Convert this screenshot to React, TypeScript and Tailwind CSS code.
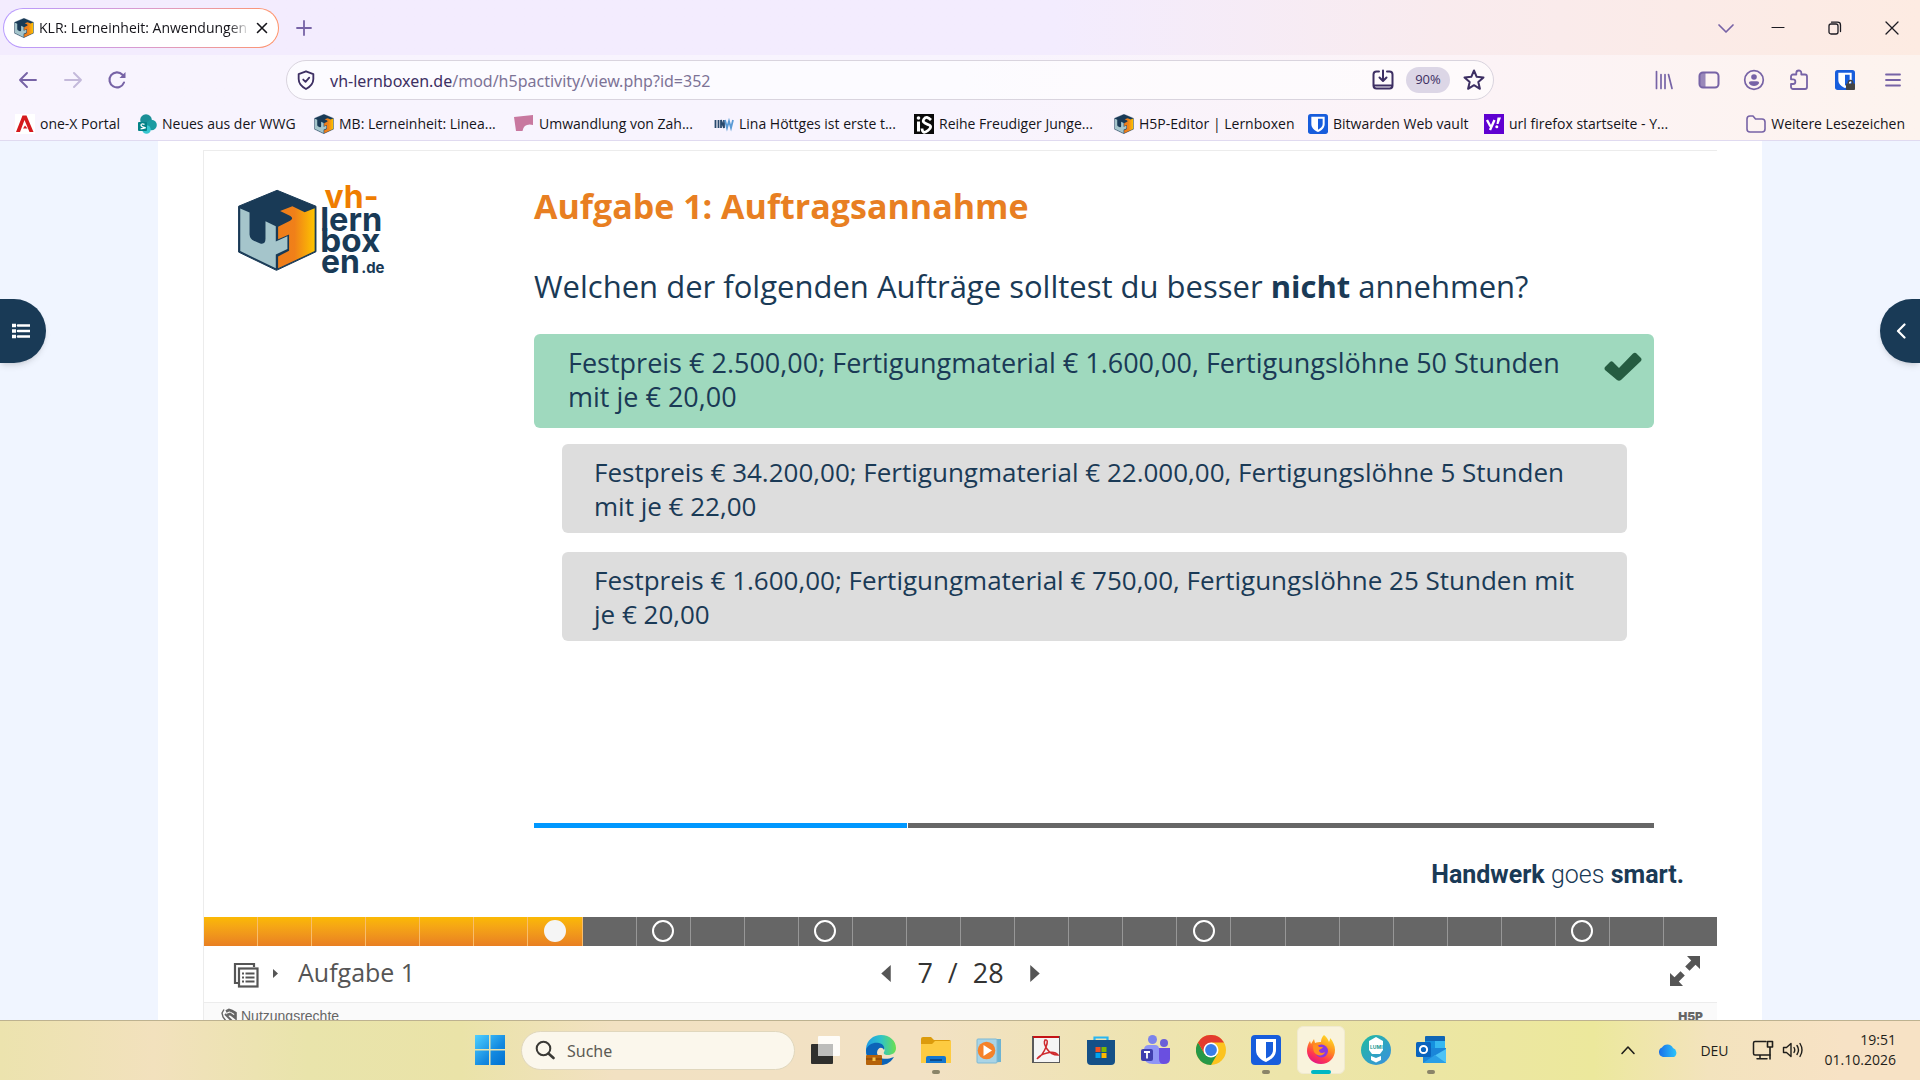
import React, { useId } from "react";
import type { ReactNode } from "react";

/* ---------- shared artwork ---------- */

function CubeShape() {
  const id = useId();
  return (
    <g>
      <defs>
        <linearGradient id={id} x1="0" x2="1" y1="0" y2="0">
          <stop offset="0" stopColor="#ef7d1a" />
          <stop offset="0.45" stopColor="#f08019" />
          <stop offset="1" stopColor="#fdc300" />
        </linearGradient>
      </defs>
      <path d="M381 151 498 199V336L379 392 265 337V199Z" fill="#193a56" stroke="#193a56" strokeWidth="3" strokeLinejoin="round" />
      <path d="M270 206 298 218V284Q299 297 311 303L330 311Q346 315 346 297V244L377 259V305L412 289V328L377 344V386L270 334Z" fill="#a5c5cb" />
      <path d="M384 261 420 243Q432 236 421 228L390 213 427 199 464 217 494 205V334L384 386V350L417 333V284L384 298Z" fill={`url(#${id})`} />
    </g>
  );
}

function CubeIcon() {
  return (
    <svg viewBox="262 148 239 247" className="h-5 w-5 shrink-0" aria-hidden="true">
      <CubeShape />
    </svg>
  );
}

function BitwardenIcon({ className }: { className: string }) {
  return (
    <svg viewBox="0 0 30 30" className={className} aria-hidden="true">
      <rect width="30" height="30" rx="4" fill="#175ddc" />
      <path d="M5 4H25V15C25 21 20 25 15 27C10 25 5 21 5 15Z" fill="#fff" />
      <path d="M15 7H22V15C22 19 19 21.500 15 23.500Z" fill="#175ddc" />
    </svg>
  );
}

function BrandLogo() {
  return (
    <svg viewBox="258 120 450 295" className="h-[98px] w-[150px] overflow-visible" role="img" aria-label="vh-lernboxen.de">
      <CubeShape />
      <g fontFamily="Inter, sans-serif" fontWeight="700" fill="#193a56">
        <text x="524" y="203" fontSize="96" fill="#ef7d00">vh-</text>
        <text x="511" y="275" fontSize="98">lern</text>
        <text x="511" y="337" fontSize="100">box</text>
        <text x="513" y="401" fontSize="96">en</text>
        <text x="634" y="401" fontSize="45">.de</text>
      </g>
    </svg>
  );
}

/* ---------- browser chrome ---------- */

function IconButton({ label, className = "", children }: { label: string; className?: string; children: ReactNode }) {
  return (
    <button type="button" aria-label={label} className={`flex shrink-0 items-center justify-center ${className}`}>
      {children}
    </button>
  );
}

const line = { fill: "none", stroke: "currentColor", strokeWidth: 2, strokeLinecap: "round", strokeLinejoin: "round" } as const;

function TitleBar() {
  return (
    <div className="flex h-[55px] shrink-0 items-center bg-linear-to-r from-[#f3ecfe] from-55% via-[#f9ebee] via-75% to-[#fdebe2] pl-[3px]">
      <div className="h-10 w-[276px] rounded-full bg-linear-to-r from-[#b79bff] via-[#d99bd0] to-[#ff9468] p-px">
        <div className="flex h-full items-center rounded-full bg-white pr-2 pl-[10px]">
          <CubeIcon />
          <span className="ml-[5px] flex-1 overflow-hidden text-sm whitespace-nowrap text-[#15141a] [mask-image:linear-gradient(to_right,black_90%,transparent)]">
            KLR: Lerneinheit: Anwendungen
          </span>
          <IconButton label="Tab schließen" className="ml-1 h-4 w-4 text-[#15141a]">
            <svg viewBox="0 0 16 16" className="h-4 w-4"><path d="M3.500 3.500 12.500 12.500M12.500 3.500 3.500 12.500" {...line} strokeWidth={1.6} /></svg>
          </IconButton>
        </div>
      </div>
      <IconButton label="Neuer Tab" className="ml-[15px] h-5 w-5 text-[#7763a6]">
        <svg viewBox="0 0 20 20" className="h-5 w-5"><path d="M10 3V17M3 10H17" {...line} strokeWidth={1.8} /></svg>
      </IconButton>
      <div className="ml-auto flex items-center text-[#1c1b22]">
        <IconButton label="Tabs auflisten" className="h-10 w-[46px] text-[#7763a6]">
          <svg viewBox="0 0 20 20" className="h-5 w-5"><path d="M3 7 10 14 17 7" {...line} strokeWidth={1.7} /></svg>
        </IconButton>
        <IconButton label="Minimieren" className="h-10 w-[57px]">
          <svg viewBox="0 0 14 14" className="h-[14px] w-[14px]"><path d="M1 6.500H13" {...line} strokeWidth={1.200} /></svg>
        </IconButton>
        <IconButton label="Verkleinern" className="h-10 w-[57px]">
          <svg viewBox="0 0 14 14" className="h-[14px] w-[14px]">
            <g {...line} strokeWidth={1.300}><rect x="1" y="3" width="9" height="10" rx="2" /><path d="M3.500 1.200H9.500Q12.500 1.200 12.500 4V10.500" /></g>
          </svg>
        </IconButton>
        <IconButton label="Schließen" className="h-10 w-[57px]">
          <svg viewBox="0 0 14 14" className="h-[14px] w-[14px]"><path d="M1 1 13 13M13 1 1 13" {...line} strokeWidth={1.300} /></svg>
        </IconButton>
      </div>
    </div>
  );
}

function NavBar() {
  return (
    <div className="flex h-[50px] items-center pl-4 text-[#7763a6]">
      <IconButton label="Zurück" className="h-6 w-6">
        <svg viewBox="0 0 24 24" className="h-6 w-6"><path d="M20 12H4M11 5 4 12 11 19" {...line} strokeWidth={1.900} /></svg>
      </IconButton>
      <IconButton label="Vor" className="ml-[21px] h-6 w-6 opacity-40">
        <svg viewBox="0 0 24 24" className="h-6 w-6"><path d="M4 12H20M13 5 20 12 13 19" {...line} strokeWidth={1.900} /></svg>
      </IconButton>
      <IconButton label="Neu laden" className="ml-5 h-6 w-6">
        <svg viewBox="0 0 24 24" className="h-6 w-6"><path d="M19 14.500A7.500 7.500 0 1 1 17.500 6.800L19 8.500" {...line} strokeWidth={2.100} /><path d="M20.500 4V10H14.500Z" fill="currentColor" /></svg>
      </IconButton>
      <div className="ml-[157px] flex h-10 w-[1208px] min-w-0 shrink items-center rounded-full border border-[#d9d4de] bg-white/60 pr-[7px] pl-2 text-[#3d2f63]">
        <svg viewBox="0 0 24 24" className="h-[22px] w-[22px] shrink-0" aria-hidden="true"><path d="M12 2.500 20 5.500V11C20 16 16.500 19.500 12 21.800C7.500 19.500 4 16 4 11V5.500ZM9 11.500 11.500 14 15.500 9.500" {...line} /></svg>
        <label htmlFor="address" className="sr-only">Adresse</label>
        <div className="relative ml-[13px] min-w-0 flex-1 pt-[2px] font-['Noto_Sans',sans-serif] text-base leading-6">
          <span aria-hidden="true" className="block whitespace-nowrap text-[#7c7396]"><span className="text-[#3d2f63]">vh-lernboxen.de</span>/mod/h5pactivity/view.php?id=352</span>
          <input id="address" defaultValue="" className="absolute inset-0 w-full bg-transparent outline-none" />
        </div>
        <IconButton label="App installieren" className="h-6 w-6">
          <svg viewBox="0 0 24 24" className="h-6 w-6"><path d="M8 3.500H5.500A3 3 0 0 0 2.500 6.500V17.500A3 3 0 0 0 5.500 20.500H18.500A3 3 0 0 0 21.500 17.500V6.500A3 3 0 0 0 18.500 3.500H16M3 17.500H21M12 2.500V12.500M8.500 9.500 12 13 15.500 9.500" {...line} /></svg>
        </IconButton>
        <button type="button" className="ml-[11px] h-[26px] w-11 shrink-0 rounded-full bg-[#dcd6e6] text-[13px]">90%</button>
        <IconButton label="Lesezeichen hinzufügen" className="ml-3 h-6 w-6">
          <svg viewBox="0 0 24 24" className="h-6 w-6"><path d="M12 2.500 14.700 8.800 21.500 9.400 16.300 13.900 17.900 20.800 12 17.200 6.100 20.800 7.700 13.900 2.500 9.400 9.300 8.800Z" {...line} /></svg>
        </IconButton>
      </div>
      <div className="ml-auto flex items-center pr-[15px]">
        <IconButton label="Bibliothek" className="h-6 w-[45px]">
          <svg viewBox="0 0 24 24" className="h-6 w-6"><path d="M4.500 3.500V20.500M9 6.500V20.500M13 6.500V20.500M16.500 6.500 20 20.500" {...line} strokeWidth={1.700} /></svg>
        </IconButton>
        <IconButton label="Seitenleiste" className="h-6 w-[45px]">
          <svg viewBox="0 0 24 24" className="h-6 w-6"><rect x="2.500" y="4.500" width="19" height="15" rx="3.500" {...line} /><path d="M5.500 5H8.500V19H5.500Q3 19 3 16V8Q3 5 5.500 5" fill="currentColor" opacity=".75" /></svg>
        </IconButton>
        <IconButton label="Konto" className="h-6 w-[45px]">
          <svg viewBox="0 0 24 24" className="h-6 w-6"><circle cx="12" cy="12" r="9.300" {...line} strokeWidth={1.700} /><circle cx="12" cy="9" r="2.800" fill="currentColor" /><path d="M6.800 15Q6.800 13.300 9 13.300H15Q17.200 13.300 17.200 15Q15.500 18 12 18T6.800 15" fill="currentColor" /></svg>
        </IconButton>
        <IconButton label="Erweiterungen" className="h-6 w-[45px]">
          <svg viewBox="0 0 24 24" className="h-6 w-6"><path d="M9.300 6.500V5A2.500 2.500 0 0 1 14.300 5V6.500H18A2 2 0 0 1 20 8.500V19A2 2 0 0 1 18 21H6A2 2 0 0 1 4 19V16H6A2.300 2.300 0 0 0 6 11.300H4V8.500A2 2 0 0 1 6 6.500Z" {...line} strokeWidth={1.800} /></svg>
        </IconButton>
        <IconButton label="Bitwarden" className="relative ml-3 h-6 w-6">
          <BitwardenIcon className="h-5 w-5" />
          <svg viewBox="0 0 10 12" className="absolute right-[2px] bottom-[2px] h-[11px] w-[9px]"><path d="M2.500 6V4A2.500 2.500 0 0 1 7.500 4V6" fill="none" stroke="#444" strokeWidth="1.500" /><rect x="0" y="5" width="10" height="7" rx="1" fill="#444" /></svg>
        </IconButton>
        <IconButton label="Menü" className="ml-6 h-6 w-6">
          <svg viewBox="0 0 24 24" className="h-6 w-6"><path d="M5 6.500H19M5 12H19M5 17.500H19" {...line} strokeWidth={1.800} /></svg>
        </IconButton>
      </div>
    </div>
  );
}

const small = "h-5 w-5 shrink-0";

const bookmarks: { label: string; width: string; icon: ReactNode }[] = [
  {
    label: "one-X Portal",
    width: "w-[122px]",
    icon: (
      <svg viewBox="0 0 20 20" className={small}><rect width="20" height="20" fill="#fff" /><path d="M1 18 7.500 1.500H11.500L18.500 18H14.500L9.500 6 5 18Z" fill="#d5191d" /><path d="M8 14.500 10 11.500 12.500 14.500Z" fill="#d5191d" /></svg>
    ),
  },
  {
    label: "Neues aus der WWG",
    width: "w-[177px]",
    icon: (
      <svg viewBox="0 0 20 20" className={small}><circle cx="9" cy="6" r="5.800" fill="#1b8f97" /><circle cx="14.500" cy="11" r="5.300" fill="#1a9ba1" /><circle cx="9.500" cy="15.500" r="4.300" fill="#37c6d0" /><rect x="1" y="8" width="9" height="9" rx="1" fill="#038387" /><path d="M7.500 10.300Q4 9.300 4 11T7.300 13.300T3.600 14.800" stroke="#fff" strokeWidth="1.200" fill="none" /></svg>
    ),
  },
  { label: "MB: Lerneinheit: Linea...", width: "w-[200px]", icon: <CubeIcon /> },
  {
    label: "Umwandlung von Zah...",
    width: "w-[200px]",
    icon: <svg viewBox="0 0 20 20" className={small}><path d="M0 3 19 1V11Q10 9 8.500 17H2Z" fill="#c8789f" /></svg>,
  },
  {
    label: "Lina Höttges ist erste t...",
    width: "w-[200px]",
    icon: (
      <svg viewBox="0 0 20 20" className={small}><path d="M1.500 6V14M4.500 6V14M7 14V6L10 14V6" stroke="#27496d" strokeWidth="1.800" fill="none" /><path d="M11 6 13 14 15 7 17 14 19 6" stroke="#5b9bd5" strokeWidth="1.800" fill="none" /></svg>
    ),
  },
  {
    label: "Reihe Freudiger Junge...",
    width: "w-[200px]",
    icon: (
      <svg viewBox="0 0 20 20" className={small}><rect width="20" height="20" fill="#0a0a0a" /><rect x="3" y="7.500" width="3" height="10" fill="#fff" /><circle cx="4.500" cy="4" r="1.800" fill="#fff" /><path d="M17 6Q12.500 1.500 10 5T13.500 10.300T14 16.500T8 14.500" stroke="#fff" strokeWidth="2.800" fill="none" /></svg>
    ),
  },
  { label: "H5P-Editor | Lernboxen", width: "w-[194px]", icon: <CubeIcon /> },
  { label: "Bitwarden Web vault", width: "w-[176px]", icon: <BitwardenIcon className={small} /> },
  {
    label: "url firefox startseite - Y...",
    width: "w-[200px]",
    icon: (
      <svg viewBox="0 0 20 20" className={small}><rect width="20" height="20" fill="#5f01d1" /><path d="M3 6 6.500 12.500M10.500 6 6 16" stroke="#fff" strokeWidth="2.400" fill="none" /><path d="M13.500 3.500H17L14.500 10H12.500Z" fill="#fff" /><circle cx="12.800" cy="12.700" r="1.500" fill="#fff" /></svg>
    ),
  },
];

function BookmarksBar() {
  return (
    <div className="flex h-[35px] items-center pt-[2px] pr-[15px] pl-[15px] text-sm text-[#15141a]">
      {bookmarks.map((b) => (
        <a key={b.label} href="#" className={`flex shrink-0 items-center gap-[5px] whitespace-nowrap ${b.width}`}>
          {b.icon}
          {b.label}
        </a>
      ))}
      <button type="button" className="ml-auto flex items-center gap-[5px] whitespace-nowrap">
        <svg viewBox="0 0 20 20" className="h-5 w-5 text-[#7763a6]" aria-hidden="true"><path d="M1 5A3 3 0 0 1 4 2H7L9.500 5H16A3 3 0 0 1 19 8V15A3 3 0 0 1 16 18H4A3 3 0 0 1 1 15Z" {...line} strokeWidth={1.600} /></svg>
        Weitere Lesezeichen
      </button>
    </div>
  );
}

/* ---------- slide ---------- */

const wrongAnswers = [
  "Festpreis € 34.200,00; Fertigungmaterial € 22.000,00, Fertigungslöhne 5 Stunden mit je € 22,00",
  "Festpreis € 1.600,00; Fertigungmaterial € 750,00, Fertigungslöhne 25 Stunden mit je € 20,00",
];

function Slide() {
  return (
    <section className="flex flex-1 flex-col border-t border-l border-[#ececec] pr-[63px] pl-8">
      <div className="flex flex-1">
        <div className="w-[298px] shrink-0 pt-[29px]">
          <BrandLogo />
        </div>
        <div className="flex flex-1 flex-col pt-[31px] text-[#1a3a56]">
          <h1 className="text-[34px] leading-[48px] font-bold text-[#e87f22]">Aufgabe 1: Auftragsannahme</h1>
          <h2 className="mt-[34px] text-[31px] leading-[44px]">
            Welchen der folgenden Aufträge solltest du besser <strong>nicht</strong> annehmen?
          </h2>
          <div className="mt-[26px] flex h-[94px] items-start justify-between rounded-md bg-[#9fd9be] pt-3 pr-3 pl-[34px]">
            <button type="button" className="max-w-[1020px] text-left text-[27px] leading-[34px]">
              Festpreis € 2.500,00; Fertigungmaterial € 1.600,00, Fertigungslöhne 50 Stunden mit je € 20,00
            </button>
            <svg viewBox="0 0 38 29" className="mt-[6px] h-[29px] w-[38px] shrink-0" role="img" aria-label="Richtig"><path d="M1 15 6 10Q7.500 8.500 9 10L15 16 29 1.500Q31 0 32.500 1.500L37 6Q38 7.500 37 9L17 28Q15 29.500 13 28L1 18Q0 16.500 1 15" fill="#255c41" /></svg>
          </div>
          <div className="mt-4 mr-[27px] ml-7 flex flex-col gap-[19px]">
            {wrongAnswers.map((a) => (
              <button key={a} type="button" className="flex h-[89px] items-start rounded-md bg-[#dddddd] pt-[11px] pr-8 pl-8 text-left text-[26px] leading-[34px]">
                {a}
              </button>
            ))}
          </div>
          <div className="mt-auto mb-[89px] flex h-[5px] gap-px">
            <div className="w-1/3 bg-[#0098ff]" />
            <div className="flex-1 bg-[#666]" />
          </div>
        </div>
      </div>
      <p className="-mt-[59px] -mr-[30px] mb-[25px] text-right font-[Roboto,sans-serif] text-[25px] leading-[34px] text-[#1a3a56]">
        <b className="font-bold">Handwerk</b> <span className="font-light">goes</span> <b className="font-bold">smart.</b>
      </p>
    </section>
  );
}

const taskSlides = [7, 9, 12, 19, 26];

function SlideProgress() {
  return (
    <nav aria-label="Folien" className="flex h-[29px] shrink-0 border-l border-[#ececec]">
      {Array.from({ length: 28 }, (_, i) => i + 1).map((n) => (
        <a
          key={n}
          href="#"
          aria-label={`Folie ${n}`}
          className={`flex flex-1 items-center justify-center pb-px ${n < 28 ? "border-r" : ""} ${n <= 7 ? "border-[#f8bd6c] bg-linear-to-b from-[#fbb903] to-[#e87f22]" : "border-[#979797] bg-[#666]"}`}
        >
          {taskSlides.includes(n) && (
            <span className={`h-[22px] w-[22px] rounded-full border-2 ${n === 7 ? "border-[#f5f5f5] bg-[#f5f5f5]" : "border-white"}`} />
          )}
        </a>
      ))}
    </nav>
  );
}

function SlideFooter() {
  return (
    <footer className="grid h-14 shrink-0 grid-cols-[1fr_auto_1fr] items-center border-l border-[#ececec] pr-7 pb-[2px] pl-7 text-[#555]">
      <div className="flex items-center">
        <IconButton label="Inhaltsverzeichnis" className="mt-1 h-7 w-7">
          <svg viewBox="0 0 28 28" className="h-7 w-7"><path d="M6 22H3V3H22V6" fill="none" stroke="currentColor" strokeWidth="2.200" /><rect x="7" y="7.500" width="18.500" height="18" fill="none" stroke="currentColor" strokeWidth="2.200" /><path d="M10 12.500H12M10 16.500H12M10 20.500H12M13.500 12.500H22.500M13.500 16.500H22.500M13.500 20.500H22.500" stroke="currentColor" strokeWidth="1.800" /></svg>
        </IconButton>
        <svg viewBox="0 0 5 9" className="ml-[13px] h-[9px] w-[5px]" aria-hidden="true"><path d="M0 0 5 4.500 0 9Z" fill="currentColor" /></svg>
        <span className="mb-[2px] ml-5 text-[25px] leading-9">Aufgabe 1</span>
      </div>
      <div className="flex items-center text-[27px] leading-9 text-[#333]">
        <IconButton label="Vorherige Folie" className="h-6 w-6 text-[#555]">
          <svg viewBox="0 0 10 18" className="h-[17px] w-[10px]"><path d="M10 0V18L0 9Z" fill="currentColor" /></svg>
        </IconButton>
        <span className="mx-[19px] flex gap-[15px]"><span>7</span><span>/</span><span>28</span></span>
        <IconButton label="Nächste Folie" className="h-6 w-6 text-[#555]">
          <svg viewBox="0 0 10 18" className="h-[17px] w-[10px]"><path d="M0 0V18L10 9Z" fill="currentColor" /></svg>
        </IconButton>
      </div>
      <IconButton label="Vollbild" className="-mr-3 mb-1 h-8 w-8 justify-self-end">
        <svg viewBox="0 0 32 32" className="h-8 w-8" fill="currentColor"><path d="M18 1H31V14L26.500 9.800 20.500 15.800 16.200 11.500 22.200 5.500Z" /><path d="M14 31H1V18L5.500 22.200 11.500 16.200 15.800 20.500 9.800 26.500Z" /></svg>
      </IconButton>
    </footer>
  );
}

function Page() {
  return (
    <main className="relative flex min-h-0 flex-1 justify-center bg-[#f0f5ff] px-[158px]">
      <div className="flex min-w-0 flex-1 flex-col overflow-hidden bg-white pt-[9px] pr-[45px] pl-[45px]">
        <Slide />
        <SlideProgress />
        <SlideFooter />
        <div className="flex h-[18px] shrink-0 items-start justify-between overflow-hidden border-t border-l border-[#ececec] bg-[#fafafa] pr-[14px] pl-[17px] text-[#666]">
          <button type="button" className="flex items-center gap-1 pt-1 font-['Liberation_Sans',sans-serif] text-sm leading-[18px]">
            <svg viewBox="0 0 16 16" className="h-4 w-4" aria-hidden="true" fill="none" stroke="currentColor"><path d="M3 1.500 1 5 2 9 5 13" strokeWidth="1.400" /><path d="M5 3.500 8 2 11 3 14.500 5V10L12 8 9 6 6 7" strokeWidth="2.600" /><path d="M4 6 11 13" strokeWidth="2" /></svg>
            Nutzungsrechte
          </button>
          <a href="#" className="pt-[5px] font-[Inter,sans-serif] text-xs leading-[18px] font-black">H5P</a>
        </div>
      </div>
      <button type="button" aria-label="Kursindex öffnen" className="absolute top-[158px] left-0 flex h-16 w-[46px] items-center rounded-r-full bg-[#193a56] pl-3 text-white shadow-md">
        <svg viewBox="0 0 18 16" className="h-4 w-[18px]"><path d="M0 2.500H4M0 8H4M0 13.500H4" stroke="currentColor" strokeWidth="3.400" /><path d="M6 2.500H17.500M6 8H17.500M6 13.500H17.500" stroke="currentColor" strokeWidth="2.600" strokeLinecap="round" /></svg>
      </button>
      <button type="button" aria-label="Blockleiste öffnen" className="absolute top-[158px] right-0 flex h-16 w-10 items-center rounded-l-full bg-[#193a56] pl-4 text-white shadow-md">
        <svg viewBox="0 0 10 16" className="h-4 w-[10px]"><path d="M8.500 1.500 2 8 8.500 14.500" {...line} strokeWidth={2.200} /></svg>
      </button>
    </main>
  );
}

/* ---------- taskbar ---------- */

const app = "h-[30px] w-[30px]";

const apps: { name: string; state?: "open" | "active"; icon: ReactNode }[] = [
  {
    name: "Taskansicht",
    icon: (
      <svg viewBox="0 0 30 30" className={app}><rect x="0" y="9" width="22" height="20" rx="1" fill="#2f2f2d" /><rect x="7" y="1" width="22" height="20" rx="1" fill="#fff" opacity=".88" /><rect x="7" y="9" width="15" height="12" fill="#bdbdbb" /></svg>
    ),
  },
  {
    name: "Microsoft Edge",
    icon: (
      <svg viewBox="0 0 30 30" className={app}>
        <defs><linearGradient id="edgeTop" x1="0" x2="1"><stop stopColor="#1e9be6" /><stop offset=".5" stopColor="#2fc3c8" /><stop offset="1" stopColor="#6be04f" /></linearGradient></defs>
        <path d="M0 17C-1 7 6 0 15 0C24 0 30 6 30 13C30 18 26 20 22 20C19 20 17 19 18 17C20 14 17 11 13 12C8 13 8 20 10 26C4 25 0 21 0 17" fill="url(#edgeTop)" />
        <path d="M0 15C2 9 8 7 13 8C17 9 19 12 18 15C16 11 11 13 11 18C12 23 18 26 28 22C24 29 18 30 15 30C6 30 0 24 0 15" fill="#0c64b8" />
        <rect x="0" y="20" width="16" height="10" rx="1" fill="#b5620a" /><path d="M0 24H16" stroke="#7d3f05" /><rect x="6.500" y="22.500" width="3" height="3.500" fill="#f6c34a" />
      </svg>
    ),
  },
  {
    name: "Explorer",
    state: "open",
    icon: (
      <svg viewBox="0 0 30 30" className={app}><path d="M0 4Q0 2 2 2H10L13 5H28Q30 5 30 7V12H0Z" fill="#dc9b0c" /><path d="M0 9H11L14 6H30V28H0Z" fill="#fdcb41" /><path d="M5 28V23Q5 21 7 21H23Q25 21 25 23V28Z" fill="#1477cf" /><path d="M9 25H21" stroke="#0b4a8c" strokeWidth="2" /></svg>
    ),
  },
  {
    name: "Windows Media Player",
    icon: (
      <svg viewBox="0 0 30 30" className={app}><path d="M6 4H25V27L6 28Z" fill="#6eb3d2" /><rect x="1" y="4" width="20" height="24" rx="1" fill="#a9d4e6" stroke="#7eb9d4" /><circle cx="10.500" cy="15.500" r="8.800" fill="#f5822a" /><path d="M7.500 10 16 15.500 7.500 21Z" fill="#fff" /></svg>
    ),
  },
  {
    name: "PDF",
    icon: (
      <svg viewBox="0 0 30 30" className={app}><rect x="1" y="1" width="28" height="27" fill="#5a5a5a" /><rect x="3" y="3" width="25" height="24" fill="#f5f5f5" /><path d="M2 1H28V3H2Z" fill="#c41216" /><path d="M6 24Q12 20 15 12T14 5Q12 8 16 14T27 20Q24 16 16 18T6 24" fill="none" stroke="#cf2a2d" strokeWidth="1.500" /></svg>
    ),
  },
  {
    name: "Microsoft Store",
    icon: (
      <svg viewBox="0 0 30 30" className={app}><path d="M8.500 8V2.500H21.500V8" fill="none" stroke="#29b6f2" strokeWidth="2.200" /><path d="M1 5H29V26Q29 30 25 30H5Q1 30 1 26Z" fill="#155087" /><path d="M9.500 12H14.500V17H9.500Z" fill="#f25022" /><path d="M15.500 12H20.500V17H15.500Z" fill="#7fba00" /><path d="M9.500 18H14.500V23H9.500Z" fill="#00a4ef" /><path d="M15.500 18H20.500V23H15.500Z" fill="#ffb900" /></svg>
    ),
  },
  {
    name: "Microsoft Teams",
    icon: (
      <svg viewBox="0 0 30 30" className={app}><circle cx="11.500" cy="4.500" r="4.500" fill="#7b83eb" /><circle cx="23" cy="8" r="4" fill="#6a5fd8" /><path d="M17 13H29V24Q29 29 23 29H17Z" fill="#6a4fe0" /><path d="M8 10H14Q18 10 18 14V24Q18 29 23 29H12Q3 29 3 21V15Q3 10 8 10" fill="#8f95f5" /><rect x="0" y="14" width="12" height="12" rx="2" fill="#3f3fae" /><path d="M3 17H9M6 17V23.500" stroke="#fff" strokeWidth="1.800" /></svg>
    ),
  },
  {
    name: "Google Chrome",
    icon: (
      <svg viewBox="0 0 30 30" className={app}><circle cx="15" cy="15" r="15" fill="#fcc31e" /><path d="M21.500 18.700 15 30A15 15 0 0 1 2 7.500L8.500 18.700Z" fill="#279847" /><path d="M2 7.500A15 15 0 0 1 28 7.500H15L8.500 18.700Z" fill="#e33b2e" /><circle cx="15" cy="15" r="7.500" fill="#fff" /><circle cx="15" cy="15" r="5.900" fill="#3a7de8" /></svg>
    ),
  },
  { name: "Bitwarden", state: "open", icon: <BitwardenIcon className={app} /> },
  {
    name: "Firefox",
    state: "active",
    icon: (
      <svg viewBox="0 0 30 30" className={app}>
        <defs><linearGradient id="fox" x1=".8" y1="0" x2=".3" y2="1"><stop stopColor="#ffe226" /><stop offset=".45" stopColor="#ff8a1f" /><stop offset=".75" stopColor="#ff3750" /><stop offset="1" stopColor="#e31587" /></linearGradient></defs>
        <path d="M18 0C21 2 22 5 23 7C24 5 24 4 24 3C27 6 29 11 29 15C29 23 23 29 15 29C7 29 1 23 1 16C1 12 2 9 4 6L5 9L8 4L9 8C11 7 13 7 15 7C15 4 16 2 18 0" fill="url(#fox)" />
        <circle cx="15.500" cy="16" r="6.500" fill="#8a38e0" />
        <path d="M7 10C10 9 12 10 13 12L17 12C16 14 14 14 13 15C13 18 16 19 19 17C18 21 11 22 8 17C7 14 7 12 7 10" fill="#ff8f20" />
      </svg>
    ),
  },
  {
    name: "Lumi",
    icon: (
      <svg viewBox="0 0 30 30" className={app}><defs><linearGradient id="lumi" x1="0" x2="1" y1="0" y2="1"><stop stopColor="#21bb9f" /><stop offset="1" stopColor="#3a8fe0" /></linearGradient></defs><circle cx="15" cy="15" r="15" fill="url(#lumi)" /><path d="M15 2 22 6V15L19 19H11L8 15V6Z" fill="#fff" /><path d="M10 21 15 23 20 21V25L15 27.500 10 25Z" fill="#fff" /><text x="9" y="14" fontSize="5" fontWeight="700" fill="#1b9a94" fontFamily="Inter, sans-serif">LUMI</text></svg>
    ),
  },
  {
    name: "Outlook",
    state: "open",
    icon: (
      <svg viewBox="0 0 30 30" className={app}><rect x="9" y="1" width="20" height="26" rx="1" fill="#1066b5" /><path d="M9 6H19V13H9Z" fill="#1490df" /><path d="M19 6H29V13H19Z" fill="#35b8f1" /><path d="M7 13H30V28H7Z" fill="#1a86d9" /><path d="M30 14 18 21 30 28Z" fill="#4cc3f5" /><path d="M7 28 19 20 30 28Z" fill="#2a9fe6" /><rect x="0" y="7" width="15" height="15" rx="1.500" fill="#0a64bd" /><circle cx="7.500" cy="14.500" r="3.600" fill="none" stroke="#fff" strokeWidth="2" /></svg>
    ),
  },
];

function Taskbar() {
  return (
    <div className="flex h-[60px] shrink-0 items-center border-t border-[#bdb290] bg-[linear-gradient(90deg,#ece3ae_0%,#f2e1bd_8%,#e9e4ab_16%,#eae3a8_24%,#f2e1c2_32%,#f2e1c4_48%,#eee4b0_60%,#ece6a4_74%,#ece89c_83%,#f3e3bd_89%,#f7e2c5_96%,#f7e2c5_100%)] pb-px text-[#1f1e1a]">
      <div className="ml-[462px] flex items-center">
        <IconButton label="Start" className="h-12 w-[55px]">
          <svg viewBox="0 0 30 30" className={app}><defs><linearGradient id="win" gradientUnits="userSpaceOnUse" x1="0" y1="0" x2="30" y2="30"><stop stopColor="#4fd0ff" /><stop offset=".6" stopColor="#1389e0" /><stop offset="1" stopColor="#0070d0" /></linearGradient></defs><path d="M0 0H14V14H0ZM15.500 0H30V14H15.500ZM0 15.500H14V30H0ZM15.500 15.500H30V30H15.500Z" fill="url(#win)" /></svg>
        </IconButton>
        <div className="ml-1 flex h-[39px] w-[274px] items-center rounded-full border border-[#e0d7bd] bg-[#fbf7ec] pl-[13px]">
          <svg viewBox="0 0 20 20" className="h-5 w-5 shrink-0" aria-hidden="true"><circle cx="8.500" cy="8.500" r="6.800" fill="none" stroke="#3a3935" strokeWidth="2" /><path d="M13.500 13.500 18.500 18" stroke="#3a3935" strokeWidth="2.600" strokeLinecap="round" /></svg>
          <label htmlFor="search" className="sr-only">Suche</label>
          <input id="search" placeholder="Suche" className="ml-3 w-40 bg-transparent pt-[2px] font-['Noto_Sans',sans-serif] text-base text-[#5d5b54] outline-none placeholder:text-[#5d5b54]" />
        </div>
        <div className="ml-[3px] flex">
          {apps.map((a) => (
            <button key={a.name} type="button" aria-label={a.name} className="relative flex h-12 w-[55px] items-center justify-center">
              {a.state === "active" && <span className="absolute inset-y-0 right-[3px] left-1 rounded-md border border-[#f0ead0] bg-[#f9f3dc]" />}
              <span className="relative">{a.icon}</span>
              {a.state === "active" && <span className="absolute bottom-0 h-1 w-5 rounded-full bg-[#00b7c3]" />}
              {a.state === "open" && <span className="absolute bottom-0 h-1 w-2 rounded-full bg-[#8a8468]" />}
            </button>
          ))}
        </div>
      </div>
      <div className="ml-auto flex items-center pr-6 text-sm leading-5">
        <IconButton label="Ausgeblendete Symbole" className="h-10 w-5">
          <svg viewBox="0 0 16 10" className="h-[10px] w-4"><path d="M2 8.500 8 2 14 8.500" {...line} strokeWidth={1.600} /></svg>
        </IconButton>
        <IconButton label="OneDrive" className="ml-5 h-10 w-5">
          <svg viewBox="0 0 20 15" className="h-[15px] w-5"><defs><linearGradient id="cloud" x1="0" x2="1"><stop stopColor="#1a6fe8" /><stop offset="1" stopColor="#2bc4fb" /></linearGradient></defs><path d="M5 14A5 5 0 0 1 4 4.500A6.300 6.300 0 0 1 15 5A5 5 0 0 1 16 14Z" fill="url(#cloud)" /></svg>
        </IconButton>
        <button type="button" className="ml-[22px] w-[29px] pt-px">DEU</button>
        <IconButton label="Netzwerk" className="ml-[22px] h-10 w-6">
          <svg viewBox="0 0 24 22" className="h-[22px] w-6"><path d="M15 2.500H4Q2.500 2.500 2.500 4V14.500Q2.500 16 4 16H19M9 16V19.500M6 19.800H16" {...line} strokeWidth={1.500} /><path d="M16.500 2.500H21.500V8H16.500ZM19 8V20" {...line} strokeWidth={1.600} /></svg>
        </IconButton>
        <IconButton label="Lautstärke" className="ml-[7px] h-10 w-[22px]">
          <svg viewBox="0 0 22 20" className="h-5 w-[22px]"><path d="M1.500 7.500H4.500L9 3.500V16.500L4.500 12.500H1.500ZM12 7.500Q13.500 10 12 12.500M15 5.500Q18 10 15 14.500M18 3.500Q22 10 18 16.500" {...line} strokeWidth={1.400} /></svg>
        </IconButton>
        <div className="ml-4 w-[76px] text-right"><div>19:51</div><div>01.10.2026</div></div>
      </div>
    </div>
  );
}

export default function App() {
  return (
    <div className="flex h-screen flex-col overflow-hidden font-['Open_Sans',sans-serif]">
      <TitleBar />
      <div className="shrink-0 border-b border-[#e0daf0] bg-linear-to-r from-[#f8f4fe] from-50% via-[#fcf3f7] via-75% to-[#fdf3ee]">
        <NavBar />
        <BookmarksBar />
      </div>
      <Page />
      <Taskbar />
    </div>
  );
}
